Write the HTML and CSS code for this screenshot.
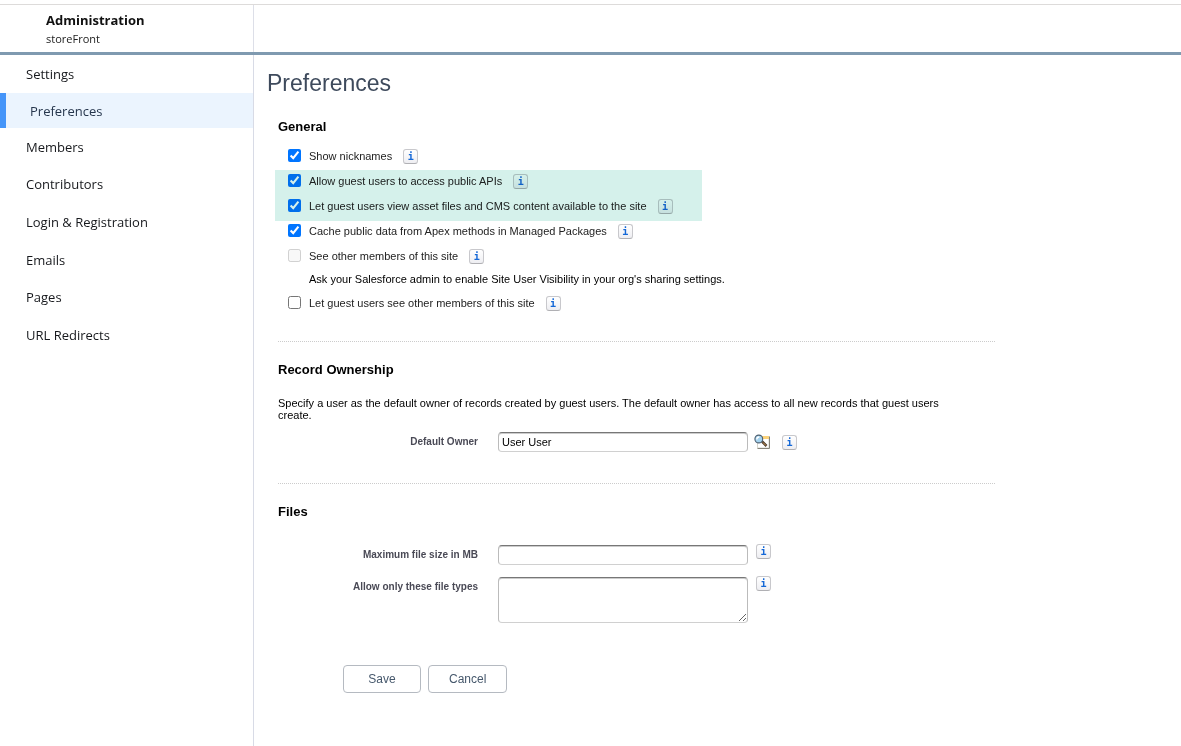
FILE: index.html
```html
<!DOCTYPE html>
<html lang="en">
<head>
<meta charset="utf-8">
<title>Administration - Preferences</title>
<link rel="stylesheet" href="styles.css">
</head>
<body>
<header class="topbar">
  <div class="brand">
    <div class="brand-title">Administration</div>
    <div class="brand-site">storeFront</div>
  </div>
</header>
<div class="layout">
  <nav class="sidebar">
    <a class="nav-link" href="#">Settings</a>
    <a class="nav-link active" href="#" aria-current="page">Preferences</a>
    <a class="nav-link" href="#">Members</a>
    <a class="nav-link" href="#">Contributors</a>
    <a class="nav-link" href="#">Login &amp; Registration</a>
    <a class="nav-link" href="#">Emails</a>
    <a class="nav-link" href="#">Pages</a>
    <a class="nav-link" href="#">URL Redirects</a>
  </nav>
  <main class="content">
    <h1 class="page-title">Preferences</h1>
    <form class="form">
      <section class="section">
        <h2 class="section-title">General</h2>
        <div class="options">
          <div class="option"><input type="checkbox" id="nick" checked><label for="nick">Show nicknames</label><button type="button" class="info" aria-label="Info">i</button></div>
          <div class="highlight">
            <div class="option"><input type="checkbox" id="api" checked><label for="api">Allow guest users to access public APIs</label><button type="button" class="info" aria-label="Info">i</button></div>
            <div class="option"><input type="checkbox" id="cms" checked><label for="cms">Let guest users view asset files and CMS content available to the site</label><button type="button" class="info" aria-label="Info">i</button></div>
          </div>
          <div class="option"><input type="checkbox" id="cache" checked><label for="cache">Cache public data from Apex methods in Managed Packages</label><button type="button" class="info" aria-label="Info">i</button></div>
          <div class="option"><input type="checkbox" id="members" disabled><label for="members">See other members of this site</label><button type="button" class="info" aria-label="Info">i</button></div>
          <p class="option-note">Ask your Salesforce admin to enable Site User Visibility in your org's sharing settings.</p>
          <div class="option"><input type="checkbox" id="guest"><label for="guest">Let guest users see other members of this site</label><button type="button" class="info" aria-label="Info">i</button></div>
        </div>
      </section>
      <section class="section">
        <h2 class="section-title">Record Ownership</h2>
        <p class="description">Specify a user as the default owner of records created by guest users. The default owner has access to all new records that guest users create.</p>
        <div class="field">
          <label class="field-label" for="owner">Default Owner</label>
          <input class="control" type="text" id="owner" value="User User">
          <button type="button" class="lookup" aria-label="Owner lookup">
            <svg width="17" height="16" viewBox="0 0 17 16">
              <path d="M3.500 2.500H15V14H3.500Z" fill="#fff" stroke="#d5d5cc"/>
              <path d="M8 2H15V5H8Z" fill="#fbd27a"/>
              <path d="M15.500 2.500V14.500H3.500" fill="none" stroke="#85837a"/>
              <path d="M8 7.500L12.500 12" stroke="#4a3a2c" stroke-width="2.600"/>
              <path d="M9 8.500L12 11.500" stroke="#d09a58"/>
              <circle cx="4.800" cy="5" r="3.900" fill="#a5d3ef" stroke="#4d5f70" stroke-width="1.100"/>
              <path d="M2.800 5.500Q2.800 3 5.300 3" fill="none" stroke="#fff" stroke-width="1.300"/>
            </svg>
          </button>
          <button type="button" class="info" aria-label="Info">i</button>
        </div>
      </section>
      <section class="section">
        <h2 class="section-title">Files</h2>
        <div class="file-fields">
          <div class="field top">
            <label class="field-label" for="size">Maximum file size in MB</label>
            <input class="control" type="text" id="size">
            <button type="button" class="info" aria-label="Info">i</button>
          </div>
          <div class="field top">
            <label class="field-label" for="types">Allow only these file types</label>
            <textarea class="control area" id="types"></textarea>
            <button type="button" class="info" aria-label="Info">i</button>
          </div>
        </div>
      </section>
      <div class="actions">
        <button type="submit" class="btn">Save</button>
        <button type="button" class="btn">Cancel</button>
      </div>
    </form>
  </main>
</div>
</body>
</html>
```
FILE: styles.css
```css
* { box-sizing: border-box; }
html, body { height: 100%; }
body {
  margin: 0;
  display: flex;
  flex-direction: column;
  background: #fff;
  color: #000;
  font-family: "Liberation Sans", Arial, sans-serif;
  font-size: 11px;
}
h1, h2, p { margin: 0; }

.topbar {
  display: flex;
  margin-top: 4px;
  border-top: 1px solid #dddbda;
  border-bottom: 3px solid #7f9ab0;
  font-family: "Open Sans", "Noto Sans", sans-serif;
}
.brand {
  width: 254px;
  padding: 6px 0 4px 46px;
  border-right: 1px solid #dddfe8;
}
.brand-title { font-size: 13px; line-height: 19px; font-weight: 700; color: #111; }
.brand-site { font-size: 11px; line-height: 18px; color: #222; }

.layout { flex: 1; display: flex; }
.sidebar {
  flex: none;
  width: 254px;
  display: grid;
  grid-template-rows: 38px 35px repeat(6, 1fr);
  height: 299px;
  font-family: "Open Sans", "Noto Sans", sans-serif;
  font-size: 13px;
}
.nav-link {
  display: flex;
  align-items: center;
  padding-left: 26px;
  color: #16181c;
  text-decoration: none;
}
.nav-link.active {
  margin-right: 1px;
  padding-left: 24px;
  border-left: 6px solid #4595f9;
  background: #ebf4fe;
  color: #26364d;
}

.content {
  flex: 1;
  margin-left: -1px;
  padding: 14px 13px 0;
  border-left: 1px solid #d8dbe6;
}
.page-title { font-size: 23px; line-height: 28px; font-weight: 400; color: #3e4a5c; }
.form { max-width: 728px; padding-left: 11px; }
.section { border-bottom: 1px dotted #ccc; padding-bottom: 26px; }
.section:first-child { padding-top: 21px; }
.section + .section { padding-top: 19px; }
.section:last-of-type { border-bottom: 0; }
.section-title { font-size: 13px; line-height: 17px; font-weight: 700; }

.options { padding-top: 8px; }
.option {
  display: flex;
  align-items: center;
  height: 25px;
  padding-left: 10px;
  color: #222;
}
.option input { margin: 0 8px 0 0; }
.option .info { margin: 2px 0 0 11px; }
.option-note { padding-left: 31px; line-height: 22px; }
.highlight { position: relative; }
.highlight::after {
  content: "";
  position: absolute;
  inset: 2px auto -3px -3px;
  width: 427px;
  background: #d5f1eb;
  mix-blend-mode: multiply;
  pointer-events: none;
}

.info {
  flex: none;
  width: 15px;
  height: 15px;
  padding: 0;
  border: 1px solid #c8c8cc;
  border-bottom-color: #b0b0b4;
  border-radius: 3px;
  background: linear-gradient(#fff, #eeeef2);
  color: #1468d7;
  font: bold 10px/13px "DejaVu Sans Mono", monospace;
}
.description { max-width: 690px; margin-top: 19px; line-height: 12px; }

.field { display: flex; align-items: center; }
.field-label {
  width: 200px;
  margin-right: 20px;
  text-align: right;
  font-size: 10px;
  line-height: 20px;
  font-weight: 700;
  color: #4a4a56;
}
.description + .field { margin: 11px 0 5px; }
.control {
  width: 250px;
  height: 20px;
  padding: 1px 3px;
  border: 1px solid #bbb;
  border-top-color: #777;
  border-bottom-color: #d0d0d0;
  border-radius: 4px;
  background: #fff;
  box-shadow: inset 0 1px #ccc;
  font: 11px "Liberation Sans", Arial, sans-serif;
}
.area { height: 46px; resize: both; }
.lookup { width: 17px; height: 16px; margin: 0 11px 0 6px; padding: 0; border: 0; background: none; }
.lookup svg { display: block; }
.top { align-items: flex-start; }
.top .info { margin: -1px 0 0 8px; }
.file-fields { display: grid; gap: 12px; padding-top: 25px; }

.actions { display: flex; gap: 7px; padding: 16px 0 0 65px; }
.btn {
  height: 28px;
  padding: 0 20px;
  min-width: 78px;
  border: 1px solid #b5bac1;
  border-radius: 4px;
  background: #fff;
  color: #46586c;
  font: 12px "Liberation Sans", Arial, sans-serif;
}
```
